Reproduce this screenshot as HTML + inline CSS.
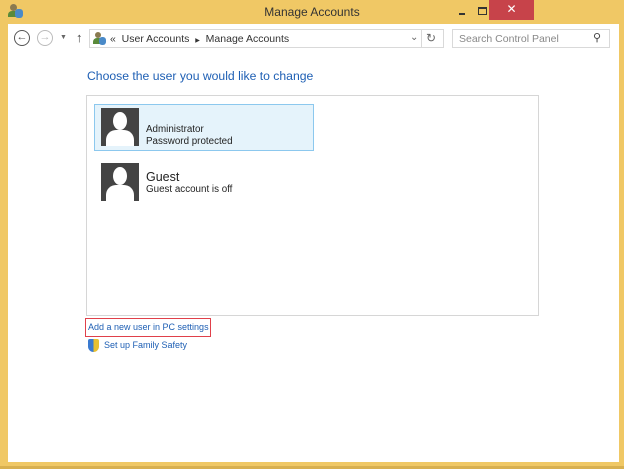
<!DOCTYPE html>
<html><head><meta charset="utf-8"><style>
*{margin:0;padding:0;box-sizing:border-box}
body{width:624px;height:469px;overflow:hidden;background:#f0c865;font-family:"Liberation Sans",sans-serif;position:relative}
.a{position:absolute}
</style></head><body>
<div class="a" style="left:0;top:466px;width:624px;height:3px;background:#d8b050"></div>
<div class="a" style="left:8px;top:4px;width:16px;height:14px">
<div class="a" style="left:2px;top:0;width:7px;height:7px;border-radius:50%;background:#8a7a50"></div>
<div class="a" style="left:0;top:7px;width:11px;height:6px;border-radius:4px 4px 0 0;background:#5a8a3a"></div>
<div class="a" style="left:7px;top:5px;width:8px;height:9px;border-radius:3px;background:#4a8ac8"></div>
</div>
<div class="a" style="left:0;top:5px;width:624px;text-align:center;font-size:12px;color:#333">Manage Accounts</div>
<div class="a" style="left:459px;top:13px;width:6px;height:2px;background:#333"></div>
<div class="a" style="left:478px;top:7px;width:9px;height:8px;border:1px solid #333;border-top-width:2px"></div>
<div class="a" style="left:489px;top:0;width:45px;height:20px;background:#c7434a;color:#fff;font-size:12px;text-align:center;line-height:19px">✕</div>
<div class="a" style="left:8px;top:24px;width:611px;height:438px;background:#fff"></div>
<div class="a" style="left:14px;top:30px;width:16px;height:16px;border:1.5px solid #555;border-radius:50%;font-size:11px;line-height:13px;text-align:center;color:#555">←</div>
<div class="a" style="left:37px;top:30px;width:16px;height:16px;border:1.5px solid #bbb;border-radius:50%;font-size:11px;line-height:13px;text-align:center;color:#bbb">→</div>
<div class="a" style="left:60px;top:34px;font-size:7px;color:#666">▼</div>
<div class="a" style="left:76px;top:30px;font-size:13px;color:#444">↑</div>
<div class="a" style="left:89px;top:29px;width:355px;height:19px;border:1px solid #d9d9d9"></div>
<div class="a" style="left:93px;top:32px;width:14px;height:13px">
<div class="a" style="left:2px;top:0;width:6px;height:6px;border-radius:50%;background:#8a7a50"></div>
<div class="a" style="left:0;top:6px;width:10px;height:6px;border-radius:4px 4px 0 0;background:#5a8a3a"></div>
<div class="a" style="left:6px;top:5px;width:7px;height:8px;border-radius:3px;background:#4a8ac8"></div>
</div>
<div class="a" style="left:110px;top:33px;font-size:10.5px;color:#333;white-space:nowrap">«&nbsp; User Accounts &nbsp;<span style="font-size:6px">▶</span>&nbsp; Manage Accounts</div>
<div class="a" style="left:410px;top:32px;font-size:10px;color:#666">⌄</div>
<div class="a" style="left:421px;top:29px;width:1px;height:19px;background:#d9d9d9"></div>
<div class="a" style="left:426px;top:31px;font-size:12px;color:#666">↻</div>
<div class="a" style="left:452px;top:29px;width:158px;height:19px;border:1px solid #d9d9d9"></div>
<div class="a" style="left:459px;top:33px;font-size:10.5px;color:#888">Search Control Panel</div>
<div class="a" style="left:593px;top:31px;font-size:11px;color:#444">⚲</div>
<div class="a" style="left:87px;top:69px;font-size:12.2px;color:#1e5fb4">Choose the user you would like to change</div>
<div class="a" style="left:86px;top:95px;width:453px;height:221px;border:1px solid #d6d6d6"></div>
<div class="a" style="left:94px;top:104px;width:220px;height:47px;background:#e5f3fb;border:1px solid #8cc8ee"></div>
<div class="a" style="left:101px;top:108px;width:38px;height:38px;background:#444;overflow:hidden">
<div class="a" style="left:12px;top:4px;width:14px;height:18px;border-radius:50%;background:#fff"></div>
<div class="a" style="left:5px;top:22px;width:28px;height:22px;border-radius:10px 10px 0 0;background:#fff"></div>
</div>
<div class="a" style="left:146px;top:124px;font-size:9.8px;color:#222;line-height:12px">Administrator<br>Password protected</div>
<div class="a" style="left:101px;top:163px;width:38px;height:38px;background:#444;overflow:hidden">
<div class="a" style="left:12px;top:4px;width:14px;height:18px;border-radius:50%;background:#fff"></div>
<div class="a" style="left:5px;top:22px;width:28px;height:22px;border-radius:10px 10px 0 0;background:#fff"></div>
</div>
<div class="a" style="left:146px;top:170px;font-size:12.5px;color:#222">Guest</div>
<div class="a" style="left:146px;top:184px;font-size:9.8px;color:#222">Guest account is off</div>
<div class="a" style="left:85px;top:318px;width:126px;height:19px;border:1px solid #e0404a"></div>
<div class="a" style="left:88px;top:322px;font-size:9px;color:#1e5fb4;white-space:nowrap">Add a new user in PC settings</div>
<div class="a" style="left:88px;top:339px;width:11px;height:13px;border-radius:2px 2px 6px 6px;background:linear-gradient(90deg,#3a7ad0 50%,#e8c030 50%)"></div>
<div class="a" style="left:104px;top:340px;font-size:9px;color:#1e5fb4">Set up Family Safety</div>
</body></html>
